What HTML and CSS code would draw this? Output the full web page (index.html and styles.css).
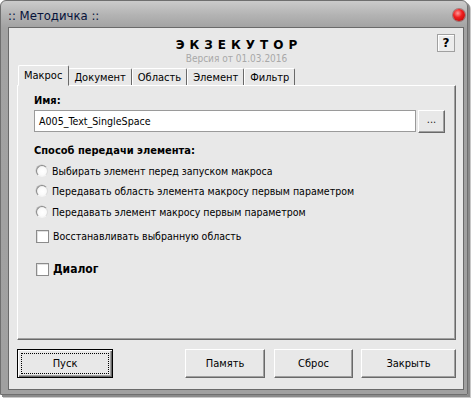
FILE: index.html
```html
<!DOCTYPE html>
<html lang="ru">
<head>
<meta charset="utf-8">
<title>Методичка</title>
<link rel="stylesheet" href="styles.css">
</head>
<body>
<div class="window">
  <div class="titlebar">
    <span class="title">:: Методичка ::</span>
    <span class="close-dot"></span>
  </div>
  <div class="client">
    <div class="header">
      <div class="spacer"></div>
      <div class="brand">
        <div class="brand-name">ЭКЗЕКУТОР</div>
        <div class="brand-version">Версия от 01.03.2016</div>
      </div>
      <div class="help-wrap"><button class="help-btn">?</button></div>
    </div>
    <div class="tabs">
      <div class="tab active">Макрос</div>
      <div class="tab">Документ</div>
      <div class="tab">Область</div>
      <div class="tab">Элемент</div>
      <div class="tab">Фильтр</div>
    </div>
    <div class="panel">
      <div class="label">Имя:</div>
      <div class="name-row">
        <div class="input">A005_Text_SingleSpace</div>
        <div class="browse">...</div>
      </div>
      <div class="label section">Способ передачи элемента:</div>
      <div class="options">
        <div class="opt r1"><span class="radio"></span>Выбирать элемент перед запуском макроса</div>
        <div class="opt r2"><span class="radio"></span>Передавать область элемента макросу первым параметром</div>
        <div class="opt r3"><span class="radio"></span>Передавать элемент макросу первым параметром</div>
        <div class="opt c1"><span class="check"></span>Восстанавливать выбранную область</div>
        <div class="opt c2 bold"><span class="check"></span>Диалог</div>
      </div>
    </div>
    <div class="buttons">
      <div class="btn default"><span class="focus">Пуск</span></div>
      <div class="btn-group">
        <div class="btn">Память</div>
        <div class="btn">Сброс</div>
        <div class="btn wide">Закрыть</div>
      </div>
    </div>
  </div>
</div>
</body>
</html>
```
FILE: styles.css
```css
* { box-sizing: border-box; }
html, body { margin: 0; padding: 0; background: #ffffff; }
body {
  width: 472px; height: 398px; overflow: hidden;
  font-family: "DejaVu Sans Condensed", "DejaVu Sans", sans-serif;
  font-size: 11px; color: #000;
}
.window {
  width: 468px; height: 395px;
  background: linear-gradient(#cbcbcb 0px, #b3b3b3 14px, #a2a2a2 27px, #a0a0a0 100%);
  border: 1px solid #6f6f6f;
  border-radius: 6px 6px 0 0;
  padding: 0 3px 4px 7px;
  display: flex; flex-direction: column;
  box-shadow: 2px 2px 0 #8a8a8a, 3px 3px 0 #c8c8c8;
}
.titlebar {
  height: 26px; display: flex; align-items: center; justify-content: space-between;
  padding: 2px 0 0 0;
}
.title { font-size: 13px; color: #06123a; font-family: "DejaVu Sans Condensed", "DejaVu Sans", sans-serif; }
.close-dot {
  width: 12px; height: 12px; border-radius: 50%;
  background: radial-gradient(circle at 40% 35%, #ff9c9c 0, #f02020 40%, #b00000 100%);
  margin-right: -1px; box-shadow: 0 0 0 1px rgba(120,0,0,0.35);
}
.client {
  flex: 1; background: #e8e8e8; border: 1px solid #6a6a6a;
  display: flex; flex-direction: column; padding: 0 7px 8px 8px;
}
.header { display: grid; grid-template-columns: 1fr auto 1fr; height: 39px; padding-top: 6px; }
.brand { text-align: center; }
.brand-name { font-weight: bold; font-size: 12px; letter-spacing: 5px; margin-right: -5px; line-height: 15px; padding-top: 4px; font-family: "DejaVu Sans", sans-serif; }
.brand-version { color: #a8a8a8; font-size: 10px; line-height: 12px; }
.help-wrap { display: flex; justify-content: flex-end; padding-right: 1px; }
.help-btn {
  width: 18px; height: 18px; padding: 0; font: bold 12px "DejaVu Sans", sans-serif; color: #000;
  background: #ececec; border: 1px solid #a0a0a0; box-shadow: inset 1px 1px 0 #fff;
}
.tabs { display: flex; height: 21px; align-items: flex-end; padding-left: 1px; margin-top: -2px; }
.tab {
  height: 18px; padding: 0 5px; line-height: 17px;
  border-top: 1px solid #ffffff; border-left: 1px solid #ffffff; border-right: 1px solid #696969;
  background: #e8e8e8; border-radius: 2px 2px 0 0;
}
.tab.active {
  height: 21px; padding: 0 6px 0 5px; line-height: 19px; margin-right: -1px; position: relative; z-index: 1;
  border-bottom: 1px solid #e8e8e8;
}
.panel {
  height: 255px; border: 1px solid; border-color: #ffffff #696969 #696969 #ffffff;
  box-shadow: inset -1px -1px 0 #a0a0a0;
  padding: 6px 10px 0 16px; margin-right: 0; margin-top: -1px;
}
.label { font-weight: bold; line-height: 17px; }
.name-row { display: flex; gap: 2px; margin-top: 1px; }
.input {
  flex: 1; height: 22px; background: #fff; border: 1px solid #9a9a9a;
  line-height: 20px; padding-left: 4px; font-size: 10.6px;
}
.browse {
  width: 27px; height: 23px; text-align: center; line-height: 18px; color: #222;
  border: 1px solid; border-color: #ffffff #696969 #696969 #ffffff; box-shadow: inset -1px -1px 0 #a0a0a0;
}
.section { margin-top: 9px; }
.options { display: flex; flex-direction: column; padding-left: 2px; font-size: 10.5px; }
.opt { display: flex; align-items: center; height: 20px; gap: 4px; }
.r1 { margin-top: 2px; }
.r3 { margin-top: 1px; }
.c1 { margin-top: 4px; }
.c2 { margin-top: 13px; font-weight: bold; font-size: 12px; }
.radio {
  width: 12px; height: 12px; border-radius: 50%;
  background: radial-gradient(circle at 55% 55%, #ffffff 0, #fafafa 50%, #e0e0e0 100%);
  border: 1px solid; border-color: #8a8a8a #dcdcdc #f4f4f4 #8a8a8a;
  box-shadow: -0.5px -0.5px 0 #c4c4c4;
}
.check { width: 13px; height: 13px; background: #fff; border: 1px solid #8c8c8c; box-shadow: inset 1px 1px 0 #e0e0e0; }
.buttons { display: flex; justify-content: space-between; margin-top: 9px; }
.btn-group { display: flex; gap: 9px; }
.btn {
  width: 80px; height: 29px; display: flex; align-items: center; justify-content: center;
  border: 1px solid; border-color: #ffffff #696969 #696969 #ffffff; box-shadow: inset -1px -1px 0 #a0a0a0;
  background: #e8e8e8;
}
.btn-group .btn:nth-child(2) { width: 79px; margin-left: 0; }
.btn.wide { width: 95px; margin-left: -1px; }
.btn.default {
  width: 96px; border: 1px solid #000;
  box-shadow: inset 1px 1px 0 #fff, inset -1px -1px 0 #696969, inset -2px -2px 0 #a0a0a0;
  padding: 3px;
}
.focus {
  width: 100%; height: 100%; display: flex; align-items: center; justify-content: center;
  border: 1px dotted #000;
}
```
